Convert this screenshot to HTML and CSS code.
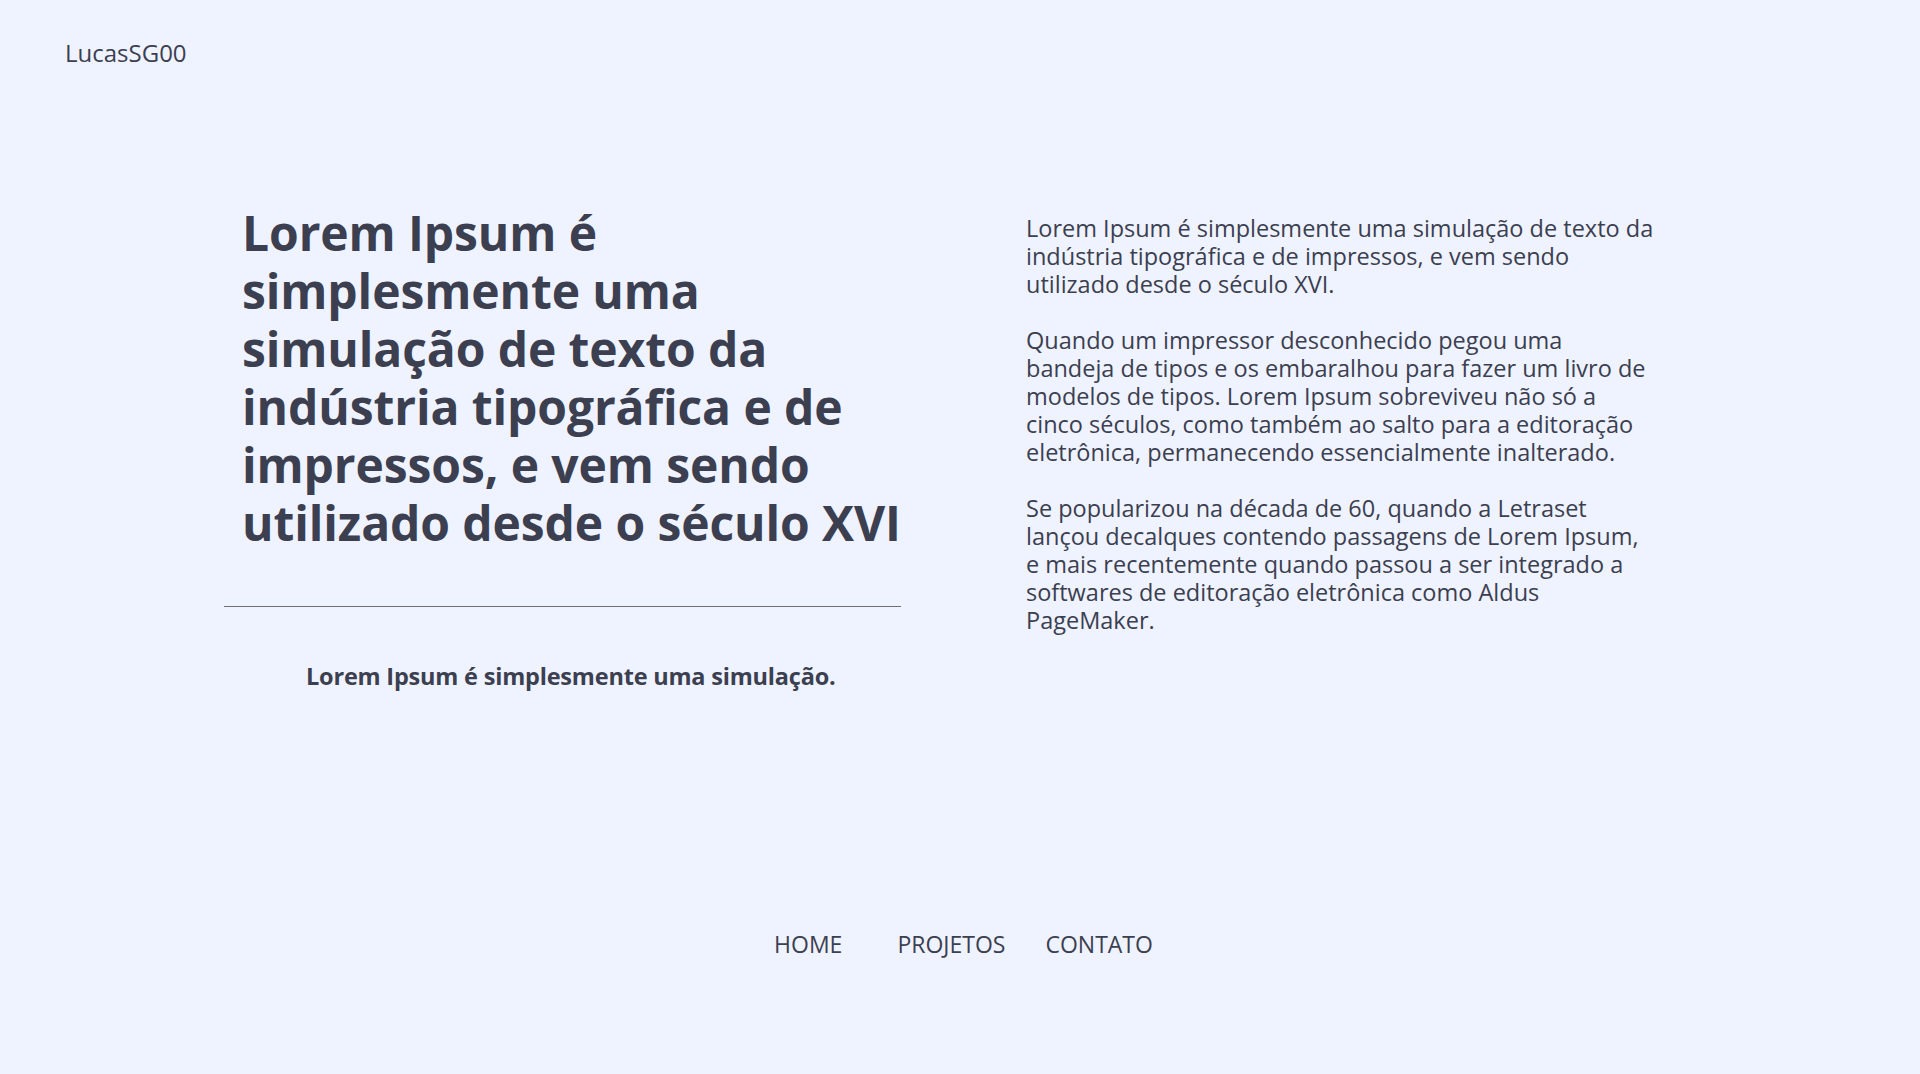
FILE: index.html
```html
<!DOCTYPE html>
<html lang="pt-BR">
<head>
<meta charset="utf-8">
<title>LucasSG00</title>
<link rel="stylesheet" href="styles.css">
</head>
<body>
<header class="topbar">
  <a class="logo" href="#">LucasSG00</a>
</header>
<main class="hero">
  <section class="hero-left">
    <h1 class="hero-title">Lorem Ipsum é simplesmente uma simulação de texto da indústria tipográfica e de impressos, e vem sendo utilizado desde o século XVI</h1>
    <hr class="divider">
    <p class="hero-sub">Lorem Ipsum é simplesmente uma simulação.</p>
  </section>
  <section class="hero-right">
    <p>Lorem Ipsum é simplesmente uma simulação de texto da indústria tipográfica e de impressos, e vem sendo utilizado desde o século XVI.</p>
    <p>Quando um impressor desconhecido pegou uma bandeja de tipos e os embaralhou para fazer um livro de modelos de tipos. Lorem Ipsum sobreviveu não só a cinco séculos, como também ao salto para a editoração eletrônica, permanecendo essencialmente inalterado.</p>
    <p>Se popularizou na década de 60, quando a Letraset lançou decalques contendo passagens de Lorem Ipsum, e mais recentemente quando passou a ser integrado a softwares de editoração eletrônica como Aldus PageMaker.</p>
  </section>
</main>
<nav class="menu">
  <a class="menu-item menu-home" href="#">HOME</a>
  <a class="menu-item menu-proj" href="#">PROJETOS</a>
  <a class="menu-item" href="#">CONTATO</a>
</nav>
</body>
</html>
```
FILE: styles.css
```css
* { box-sizing: border-box; }
html, body {
  margin: 0;
  padding: 0;
  background: #eff2ff;
  color: #3b3f50;
  font-family: "Open Sans", "Noto Sans", sans-serif;
}
body {
  width: 1920px;
  height: 1074px;
  overflow: hidden;
}
.topbar {
  padding: 38px 0 0 65px;
  height: 204px;
}
.logo {
  color: #3b3f50;
  text-decoration: none;
  font-size: 24px;
  line-height: 30px;
}
.hero {
  display: flex;
  align-items: flex-start;
  height: 725px;
}
.hero-left {
  margin-left: 224px;
  width: 677px;
}
.hero-title {
  margin: 0 -20px 0 0;
  padding-left: 18px;
  font-size: 48px;
  line-height: 58px;
  font-weight: 700;
  letter-spacing: -0.1px;
}
.divider {
  margin: 54px 0 0 0;
  border: 0;
  border-top: 1px solid #707070;
  height: 0;
}
.hero-sub {
  margin: 54px 0 0 0;
  padding-left: 82px;
  font-size: 23.5px;
  line-height: 30px;
  font-weight: 700;
  letter-spacing: -0.2px;
}
.hero-right {
  margin-left: 125px;
  margin-top: 10px;
  width: 629px;
}
.hero-right p {
  margin: 0 0 28px 0;
  font-size: 23.5px;
  line-height: 28px;
}
.menu {
  display: flex;
  justify-content: center;
  padding-left: 7px;
}
.menu-item {
  color: #3b3f50;
  text-decoration: none;
  font-size: 23px;
  line-height: 30px;
}
.menu-home { margin-right: 55px; }
.menu-proj { margin-right: 40px; }
```
